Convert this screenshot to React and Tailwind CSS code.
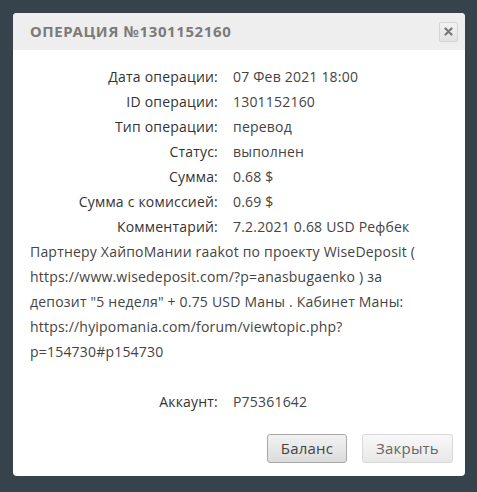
const rows = [
  ["Дата операции:", "07 Фев 2021 18:00"],
  ["ID операции:", "1301152160"],
  ["Тип операции:", "перевод"],
  ["Статус:", "выполнен"],
  ["Сумма:", "0.68 $"],
  ["Сумма с комиссией:", "0.69 $"],
  ["Комментарий:", "7.2.2021 0.68 USD Рефбек"],
];

const Label = ({ children }) => (
  <span className="inline-block w-[188px] mr-[15px] text-right text-[#333]">
    {children}
  </span>
);

const App = () => {
  return (
    <div className="h-[492px] w-[477px] bg-[#36434c] pt-[13px] pl-[13px] pr-[12px] font-['Open_Sans',sans-serif]">
      <div className="bg-white rounded-[4px] overflow-hidden">
        <div className="h-[37px] bg-[#eeeeee] flex items-center justify-between pl-[17px] pr-[7px]">
          <span className="text-[15px] font-bold tracking-[0.6px] text-[#7b7b7b] font-['Noto_Sans',sans-serif]">
            ОПЕРАЦИЯ №1301152160
          </span>
          <button className="w-[19px] h-[20px] flex items-center justify-center border border-[#d4d4d4] rounded-[2px] bg-gradient-to-b from-[#f2f2f2] to-[#e2e2e2]">
            <svg width="9" height="9" viewBox="0 0 9 9">
              <path d="M1.5 1.5L7.5 7.5M7.5 1.5L1.5 7.5" stroke="#777" strokeWidth="2.2" strokeLinecap="round" />
            </svg>
          </button>
        </div>
        <div className="pt-[14px] pl-[17px] pr-[17px] text-[14px] leading-[25px] tracking-[0.2px] text-[#444]">
          {rows.map(([l, v]) => (
            <div key={l}>
              <Label>{l}</Label>
              <span>{v}</span>
            </div>
          ))}
          <div>
            Партнеру ХайпоМании raakot по проекту WiseDeposit (
            https://www.wisedeposit.com/?p=anasbugaenko ) за
            <br />
            депозит "5 неделя" + 0.75 USD Маны . Кабинет Маны:
            https://hyipomania.com/forum/viewtopic.php?p=154730#p154730
          </div>
          <div className="mt-[25px]">
            <Label>Аккаунт:</Label>
            <span>P75361642</span>
          </div>
          <div className="flex justify-end gap-[15px] pt-[20px] pb-[13px]">
            <button className="w-[80px] h-[29px] rounded-[3px] border border-[#a9a9a9] bg-gradient-to-b from-[#f2f2f2] to-[#dcdcdc] text-[15px] text-[#444]">
              Баланс
            </button>
            <button className="w-[91px] h-[29px] rounded-[3px] border border-[#d8d8d8] bg-gradient-to-b from-[#f8f8f8] to-[#e8e8e8] text-[15px] text-[#666] mr-[-5px]">
              Закрыть
            </button>
          </div>
        </div>
      </div>
    </div>
  );
};

export default App;
